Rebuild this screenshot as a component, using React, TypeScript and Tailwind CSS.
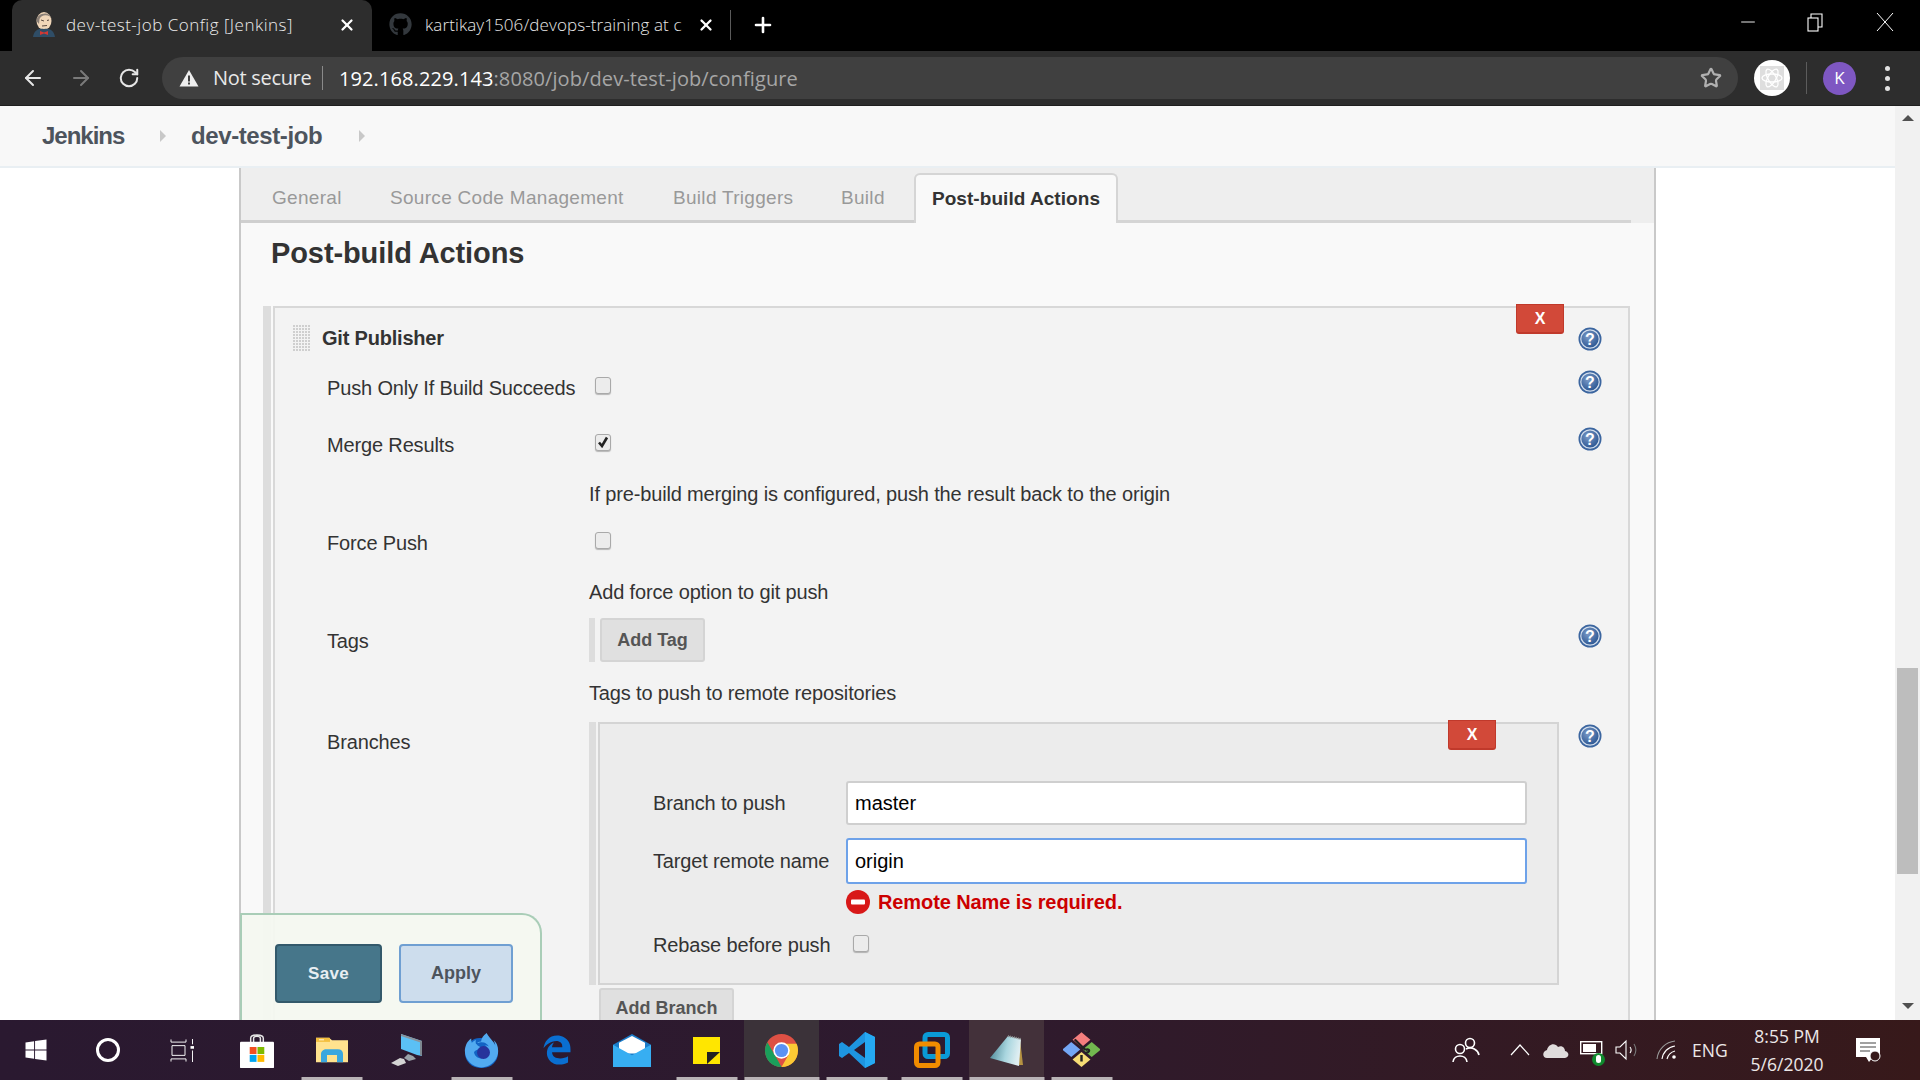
import React from "react";
import { ArrowLeft, ArrowRight, RotateCw, Star, X, Plus, Minus } from "lucide-react";
import { FaGithub, FaWindows, FaFirefoxBrowser } from "react-icons/fa";
import { FaEdgeLegacy } from "react-icons/fa6";

function Help({ className = "" }: { className?: string }) {
  return (
    <svg width="24" height="24" viewBox="0 0 24 24" className={className}>
      <defs>
        <radialGradient id="hg" cx="40%" cy="35%" r="70%">
          <stop offset="0%" stopColor="#7d9cc8" />
          <stop offset="100%" stopColor="#2a5592" />
        </radialGradient>
      </defs>
      <circle cx="12" cy="12" r="11.5" fill="#3b659f" />
      <circle cx="12" cy="12" r="9.8" fill="#d3deec" />
      <circle cx="12" cy="12" r="8.6" fill="url(#hg)" />
      <text x="12" y="17.5" textAnchor="middle" fontSize="16" fontWeight="700" fill="#fff" fontFamily="Liberation Sans">?</text>
    </svg>
  );
}

function Check({ checked = false, className = "" }: { checked?: boolean; className?: string }) {
  return (
    <div className={`w-[16px] h-[17px] rounded-[3px] border border-[#a9a9a9] bg-[#ececec] shadow-[0_1px_1px_rgba(0,0,0,0.25)] flex items-center justify-center ${className}`}>
      {checked && (
        <svg width="12" height="12" viewBox="0 0 12 12">
          <path d="M2 6.5 L5 10 L10 1.5" fill="none" stroke="#222" strokeWidth="2.6" />
        </svg>
      )}
    </div>
  );
}

function Row({ label, h, children, help, helpClass = "" }: { label?: string; h: string; children?: React.ReactNode; help?: boolean; helpClass?: string }) {
  return (
    <div className={`flex items-center pl-[52px] pr-[26px] ${h}`}>
      <div className="w-[262px] shrink-0 text-[20px] tracking-[-0.15px] text-[#333]">{label}</div>
      <div className="flex-1 flex items-center">{children}</div>
      {help && <Help className={helpClass} />}
    </div>
  );
}

function RedX({ className = "" }: { className?: string }) {
  return (
    <div className={`absolute w-[48px] h-[30px] bg-[#d24939] border border-[#c0392b] border-b-2 rounded-b-[3px] flex items-center justify-center text-white font-bold text-[16px] ${className}`}>X</div>
  );
}

function GrayBtn({ children, className = "" }: { children: React.ReactNode; className?: string }) {
  return (
    <div className={`flex items-center justify-center bg-[#e0e0e0] border-2 border-[#d4d4d4] rounded-[3px] text-[#555] font-bold text-[18px] ${className}`}>{children}</div>
  );
}

function TaskIcon({ w = "w-[75px]", line = false, lineClass = "w-[61px]", active = "", children }: { w?: string; line?: boolean; lineClass?: string; active?: string; children: React.ReactNode }) {
  return (
    <div className={`relative h-full flex items-center justify-center shrink-0 ${w} ${active}`}>
      {children}
      {line && <div className={`absolute bottom-0 left-1/2 -translate-x-1/2 h-[3px] bg-[#b9b3b6] ${lineClass}`} />}
    </div>
  );
}

export default function App() {
  return (
    <div className="w-[1920px] h-[1080px] flex flex-col overflow-hidden bg-white font-['Liberation_Sans',sans-serif]">
      {/* tab strip */}
      <div className="h-[51px] bg-black flex items-end shrink-0 relative font-['Open_Sans',sans-serif]">
        <div className="ml-[12px] w-[360px] h-[51px] bg-[#2d2d2d] rounded-t-[10px] flex items-center pl-[20px] pb-[2px]">
          <svg width="22" height="25" viewBox="0 0 22 25" className="shrink-0 ml-[1px]">
            <ellipse cx="11" cy="9" rx="7.5" ry="9" fill="#f0d6b8" />
            <path d="M3.5 9 C3 1 17 -2 18.5 7 L17 4.5 C13 2 8 3 6.5 7 L6 12Z" fill="#8a7f76" />
            <path d="M0 25 C1 18 6 16 11 17 C16 16 21 18 22 25Z" fill="#2f4d66" />
            <path d="M7 19 L11 20.5 L15 19 L15 23 L11 21.5 L7 23Z" fill="#d33833" />
            <path d="M8 8 L11 9 M14 8.5 L16 8 M9 14 L14 13.5" stroke="#5a4a40" strokeWidth="1" />
          </svg>
          <span className="ml-[11px] text-[17px] font-light tracking-[0.5px] text-[#ececec] w-[272px] whitespace-nowrap">dev-test-job Config [Jenkins]</span>
          <X size={18} strokeWidth={3} className="text-white" />
        </div>
        <div className="h-[51px] w-[403px] flex items-center pl-[17px] pb-[2px] text-[#e8e8e8]">
          <FaGithub size={23} className="text-[#33383d] shrink-0" />
          <div className="relative ml-[13px] w-[272px] h-[26px] overflow-hidden">
            <span className="text-[17px] leading-[26px] font-light tracking-[0.1px] whitespace-nowrap">kartikay1506/devops-training at c</span>
            <div className="absolute inset-y-0 right-0 w-[20px] bg-gradient-to-r from-transparent to-black" />
          </div>
          <X size={18} strokeWidth={3} className="text-white ml-[0px] shrink-0" />
          <div className="w-px h-[30px] bg-[#5a5a5a] ml-[15px] shrink-0" />
          <Plus size={24} strokeWidth={2.6} className="text-white ml-[20px] shrink-0" />
        </div>
        <div className="flex-1" />
        <div className="h-[51px] flex items-center pr-[26px] pb-[8px] text-white">
          <Minus size={22} strokeWidth={1} />
          <svg width="18" height="20" viewBox="0 0 16 20" fill="none" stroke="#fff" strokeWidth="1.1" className="ml-[47px]">
            <rect x="1" y="6" width="10" height="13" />
            <path d="M4 6 V2 H15 V15 H11" />
          </svg>
          <svg width="18" height="20" viewBox="0 0 18 20" fill="none" stroke="#fff" strokeWidth="1" className="ml-[52px]">
            <path d="M1 1 L17 19 M17 1 L1 19" />
          </svg>
        </div>
      </div>
      {/* toolbar */}
      <div className="h-[55px] bg-[#2d2d2d] border-b border-[#1f1f1f] flex items-center shrink-0 font-['Open_Sans',sans-serif]">
        <ArrowLeft size={24} strokeWidth={2} className="ml-[21px] text-[#e6e6e6]" />
        <ArrowRight size={24} strokeWidth={2} className="ml-[24px] text-[#7a7a7a]" />
        <RotateCw size={22} strokeWidth={2.2} className="ml-[25px] text-[#e6e6e6]" />
        <div className="ml-[22px] w-[1576px] h-[42px] rounded-full bg-[#404040] flex items-center pl-[17px] pr-[16px] shrink-0">
          <svg width="20" height="18" viewBox="0 0 20 18"><path d="M10 1 L19.5 17.5 H0.5Z" fill="#eee" /><rect x="9" y="6.5" width="2" height="6" fill="#404040" /><rect x="9" y="13.5" width="2" height="2" fill="#404040" /></svg>
          <span className="ml-[14px] text-[20px] tracking-[-0.3px] text-[#e8e8e8] w-[108px] whitespace-nowrap">Not secure</span>
          <div className="w-px h-[24px] bg-[#8a8a8a] ml-[1px]" />
          <span className="ml-[16px] mt-[1px] text-[20px] tracking-[0.1px] text-white whitespace-nowrap">192.168.229.143<span className="text-[#a6a6a6]">:8080/job/dev-test-job/configure</span></span>
          <div className="flex-1" />
          <Star size={22} strokeWidth={2.4} className="text-[#b0b0b0]" />
        </div>
        <div className="ml-[16px] w-[36px] h-[36px] rounded-full bg-white flex items-center justify-center shrink-0">
          <svg width="26" height="26" viewBox="0 0 26 26">
            <rect x="1" y="1" width="24" height="24" fill="#dedede" />
            <g fill="none" stroke="#fff" strokeWidth="1.3">
              <ellipse cx="13" cy="13" rx="10" ry="4" />
              <ellipse cx="13" cy="13" rx="10" ry="4" transform="rotate(60 13 13)" />
              <ellipse cx="13" cy="13" rx="10" ry="4" transform="rotate(120 13 13)" />
            </g>
          </svg>
        </div>
        <div className="w-px h-[32px] bg-[#5c5c5c] ml-[16px]" />
        <div className="ml-[16px] w-[33px] h-[33px] rounded-full bg-[#7e57c2] flex items-center justify-center text-white text-[17px]">K</div>
        <div className="ml-[29px] flex flex-col gap-[5px]">
          <div className="w-[5px] h-[5px] rounded-full bg-[#e3e3e3]" />
          <div className="w-[5px] h-[5px] rounded-full bg-[#e3e3e3]" />
          <div className="w-[5px] h-[5px] rounded-full bg-[#e3e3e3]" />
        </div>
      </div>
      {/* page */}
      <div className="flex-1 min-h-0 flex">
        <div className="flex-1 min-w-0 flex flex-col relative overflow-hidden">
          <div className="h-[62px] shrink-0 bg-[#f8f8f8] border-b-2 border-[#e9eff3] flex items-center font-bold text-[24px] tracking-[-0.4px] text-[#4d545d]">
            <span className="ml-[42px] w-[118px] tracking-[-1px]">Jenkins</span>
            <div className="w-0 h-0 border-y-[6px] border-y-transparent border-l-[6px] border-l-[#c8c8c8]" />
            <span className="ml-[25px] w-[168px]">dev-test-job</span>
            <div className="w-0 h-0 border-y-[6px] border-y-transparent border-l-[6px] border-l-[#c8c8c8]" />
          </div>
          <div className="flex-1 min-h-0 pl-[239px] overflow-hidden">
            <div className="h-[1000px] border-x-2 border-[#c9c9c9] bg-[#f9f9f9] w-[1417px]">
              {/* tabs */}
              <div className="h-[55px] bg-[#eeeeee] flex items-end">
                <div className="flex items-center h-[53px] pt-[7px] w-[673px] border-b-[3px] border-[#cfcfcf] text-[19px] tracking-[0.3px] text-[#999]">
                  <span className="ml-[31px] w-[118px]">General</span>
                  <span className="w-[283px]">Source Code Management</span>
                  <span className="w-[168px]">Build Triggers</span>
                  <span className="">Build</span>
                </div>
                <div className="w-[204px] h-[50px] bg-[#f9f9f9] border-2 border-b-0 border-[#d5d5d5] rounded-t-[6px] flex items-center justify-center font-bold text-[19px] tracking-[0.05px] text-[#333]">Post-build Actions</div>
                <div className="w-[513px] h-[3px] bg-[#d5d5d5]" />
              </div>
              <h1 className="ml-[30px] mt-[11px] h-[40px] flex items-center font-bold text-[29px] tracking-[-0.1px] text-[#333]">Post-build Actions</h1>
              {/* git publisher */}
              <div className="ml-[22px] mt-[32px] mr-[24px] flex">
                <div className="w-[8px] bg-[#dddddd] shrink-0" />
                <div className="relative ml-[2px] flex-1 border-2 border-[#d8d8d8] bg-[#f3f3f3] h-[800px]">
                  <RedX className="right-[64px] -top-[4px]" />
                  <div className="flex items-center h-[58px] pt-[2px] pl-[18px] pr-[26px]">
                    <svg width="18" height="27" viewBox="0 0 18 27" className="shrink-0">
                      <defs><pattern id="dots" width="3" height="3" patternUnits="userSpaceOnUse"><rect width="2" height="2" fill="#cfcfcf" /></pattern></defs>
                      <rect width="18" height="27" fill="url(#dots)" />
                    </svg>
                    <span className="ml-[11px] flex-1 font-bold text-[20px] tracking-[-0.2px] text-[#333]">Git Publisher</span>
                    <Help className="mt-[2px]" />
                  </div>
                  <Row label="Push Only If Build Succeeds" h="h-[44px]" help helpClass="mb-[12px]">
                    <Check className="ml-[6px] mb-[6px]" />
                  </Row>
                  <Row label="Merge Results" h="h-[70px]" help helpClass="mb-[12px]">
                    <Check checked className="ml-[6px] mb-[6px]" />
                  </Row>
                  <div className="h-[28px] flex items-center pl-[314px] text-[20px] tracking-[-0.15px] text-[#333]">If pre-build merging is configured, push the result back to the origin</div>
                  <Row label="Force Push" h="h-[70px]">
                    <Check className="ml-[6px] mb-[6px]" />
                  </Row>
                  <div className="h-[28px] flex items-center pl-[314px] text-[20px] tracking-[-0.15px] text-[#333]">Add force option to git push</div>
                  <Row label="Tags" h="h-[70px]" help helpClass="mb-[10px]">
                    <div className="w-[6px] h-[44px] bg-[#dddddd] mb-[2px]" />
                    <GrayBtn className="ml-[5px] w-[105px] h-[44px] mb-[2px] pt-[1px]">Add Tag</GrayBtn>
                  </Row>
                  <div className="h-[34px] flex items-center pl-[314px] text-[20px] tracking-[-0.15px] text-[#333]">Tags to push to remote repositories</div>
                  {/* branches */}
                  <div className="flex items-start pl-[52px] pr-[26px] mt-[12px]">
                    <div className="w-[262px] shrink-0 text-[20px] tracking-[-0.15px] text-[#333] pt-[5px]">Branches</div>
                    <div className="flex-1 min-w-0">
                      <div className="flex h-[263px]">
                        <div className="w-[7px] bg-[#dddddd] shrink-0" />
                        <div className="relative ml-[2px] flex-1 border-2 border-[#d4d4d4] bg-[#ececec] pl-[53px] pr-[30px] pt-[56px]">
                          <RedX className="right-[61px] -top-[4px]" />
                          <div className="flex items-center h-[46px]">
                            <div className="w-[193px] text-[20px] tracking-[-0.15px] text-[#333]">Branch to push</div>
                            <div className="flex-1 h-[44px] bg-white border-2 border-[#cfcfcf] rounded-[3px] flex items-center pl-[7px] text-[20px] text-black">master</div>
                          </div>
                          <div className="flex items-center h-[46px] mt-[12px]">
                            <div className="w-[193px] text-[20px] tracking-[-0.15px] text-[#333]">Target remote name</div>
                            <div className="flex-1 h-[46px] bg-white border-2 border-[#6ea2e9] rounded-[3px] flex items-center pl-[7px] text-[20px] text-black">origin</div>
                          </div>
                          <div className="flex items-center h-[30px] mt-[3px] pl-[193px]">
                            <svg width="24" height="24" viewBox="0 0 24 24" className="shrink-0">
                              <circle cx="12" cy="12" r="12" fill="#d81818" />
                              <rect x="5" y="9.5" width="14" height="5" rx="1" fill="#fff" />
                            </svg>
                            <span className="ml-[8px] font-bold text-[20px] tracking-[-0.1px] text-[#cc0000]">Remote Name is required.</span>
                          </div>
                          <div className="flex items-center h-[40px] mt-[8px]">
                            <div className="w-[193px] text-[20px] tracking-[-0.15px] text-[#333] whitespace-nowrap">Rebase before push</div>
                            <Check className="ml-[7px] mb-[4px]" />
                          </div>
                        </div>
                      </div>
                      <GrayBtn className="ml-[10px] mt-[3px] w-[135px] h-[44px] pb-[3px] rounded-b-none">Add Branch</GrayBtn>
                    </div>
                    <Help className="ml-[19px] mt-[2px]" />
                  </div>
                </div>
              </div>
            </div>
          </div>
          {/* save bar */}
          <div className="absolute left-[240px] bottom-0 w-[302px] h-[107px] bg-[#f4f8f0]/95 border-2 border-b-0 border-[#a9cdb7] rounded-tr-[20px] flex items-start pt-[29px] pl-[33px] gap-[17px]">
            <div className="w-[107px] h-[59px] bg-[#46768a] border-2 border-[#33596b] rounded-[4px] flex items-center justify-center text-[#e8eef2] font-bold text-[17px] tracking-[0.3px]">Save</div>
            <div className="w-[114px] h-[59px] bg-[#cddded] border-2 border-[#6f9fd2] rounded-[4px] flex items-center justify-center text-[#4d545d] font-bold text-[18px]">Apply</div>
          </div>
        </div>
        {/* scrollbar */}
        <div className="w-[25px] shrink-0 bg-[#f1f1f1] flex flex-col items-center">
          <div className="mt-[9px] w-0 h-0 border-x-[6px] border-x-transparent border-b-[6px] border-b-[#505050]" />
          <div className="mt-[547px] w-[21px] h-[206px] bg-[#bdbdbd]" />
          <div className="mt-[129px] w-0 h-0 border-x-[6px] border-x-transparent border-t-[6px] border-t-[#505050]" />
        </div>
      </div>
      {/* taskbar */}
      <div className="h-[60px] shrink-0 bg-gradient-to-r from-[#2a1930] via-[#2e1a2e] to-[#37191a] flex items-center font-['Open_Sans',sans-serif]">
        <TaskIcon w="w-[72px]"><FaWindows size={24} className="text-white" /></TaskIcon>
        <TaskIcon w="w-[72px]"><div className="w-[24px] h-[24px] rounded-full border-[3px] border-white" /></TaskIcon>
        <TaskIcon w="w-[75px]">
          <svg width="24" height="23" viewBox="0 0 24 26" preserveAspectRatio="none" fill="none" stroke="#fff" strokeWidth="1">
            <path d="M1 0.5 V3.5 H16 V0.5 M2 7.5 H15 V18.5 H2Z M1 25.5 V22.5 H16 V25.5 M22.5 0 V6 M22.5 13 V26" />
            <rect x="20.5" y="8" width="4" height="3" fill="#fff" stroke="none" />
          </svg>
        </TaskIcon>
        <TaskIcon>
          <svg width="34" height="35" viewBox="0 0 35 40" preserveAspectRatio="none">
            <path d="M11 12 V6 C11 1 24 1 24 6 V12 M14 12 V6 C14 3 21 3 21 6 V12" fill="none" stroke="#e6e6e6" strokeWidth="1.5" />
            <rect y="10" width="35" height="30" rx="1" fill="#fff" />
            <rect x="10" y="16" width="7" height="8" fill="#f25022" /><rect x="18" y="16" width="7" height="8" fill="#7fba00" />
            <rect x="10" y="25" width="7" height="8" fill="#00a4ef" /><rect x="18" y="25" width="7" height="8" fill="#ffb900" />
          </svg>
        </TaskIcon>
        <TaskIcon line>
          <svg width="32" height="26" viewBox="0 0 32 32" preserveAspectRatio="none">
            <path d="M0 1 H13 L16 4 H32 V31 H0Z" fill="#ffe28e" />
            <rect x="0" y="1" width="14" height="5" fill="#f3bf3e" />
            <rect x="3" y="3" width="5" height="1" fill="#fff" />
            <path d="M5 31 V21 C5 17 8 15 10 15 H22 C25 15 27 17 27 21 V31 H21 V22 H11 V31Z" fill="#3aa7de" />
          </svg>
        </TaskIcon>
        <TaskIcon>
          <svg width="32" height="32" viewBox="0 0 32 32">
            <path d="M10 0 L31 7 V22 L26 21 L10 15Z" fill="#5bc0f5" />
            <path d="M10 0 L31 7 V9 L10 2Z" fill="#8a9199" />
            <path d="M29 8 L31 7 V22 L29 21Z" fill="#7d8890" />
            <path d="M17 20 L22 22 L25 25 L18 27 L13 24Z" fill="#9aa2a8" />
            <path d="M9 24 L13 25 L15 29 L7 32 L0 29Z" fill="#d4d4d4" />
          </svg>
        </TaskIcon>
        <TaskIcon line>
          <div className="relative w-[35px] h-[36px] flex items-center justify-center">
            <div className="absolute w-[33px] h-[30px] bottom-0 rounded-full bg-[#1263c4]" />
            <FaFirefoxBrowser size={35} className="text-[#52aaf0] relative" />
            <div className="absolute w-[13px] h-[13px] top-[14px] left-[13px] rounded-full bg-[#27339c]" />
          </div>
        </TaskIcon>
        <TaskIcon><FaEdgeLegacy size={30} className="text-[#0a6fd1]" /></TaskIcon>
        <TaskIcon>
          <svg width="38" height="33" viewBox="0 0 38 34" preserveAspectRatio="none">
            <path d="M0 11 L19 0 L38 11 V34 H0Z" fill="#1a7cc9" />
            <path d="M6 9 L19 2 L32 9 V20 H6Z" fill="#fff" />
            <path d="M0 11 L19 22 L38 11 V34 H0Z" fill="#37aef2" />
          </svg>
        </TaskIcon>
        <TaskIcon line>
          <svg width="27" height="27" viewBox="0 0 27 27">
            <rect width="27" height="27" fill="#ffe600" />
            <path d="M14 15 H27 L14 27Z" fill="#222" />
          </svg>
        </TaskIcon>
        <TaskIcon active="bg-[#3b3239]" line lineClass="w-full">
          <svg width="33" height="33" viewBox="0 0 34 34">
            <circle cx="17" cy="17" r="17" fill="#dd5044" />
            <path d="M2.4 8.5 L12 25 L17 34 C7 34 0 26.5 0 17 C0 14 1 11 2.4 8.5Z" fill="#1a9f5b" />
            <path d="M17 34 C27 34 34 26.5 34 17 C34 14.5 33.5 12 32.5 10 H17 L24 22Z" fill="#fcc934" />
            <circle cx="17" cy="17" r="8.5" fill="#fff" />
            <circle cx="17" cy="17" r="6.8" fill="#5a92f3" />
          </svg>
        </TaskIcon>
        <TaskIcon line>
          <svg width="36" height="36" viewBox="0 0 36 36">
            <path d="M26 0 L36 5 V31 L26 36 L10 21 L3 26 L0 24 V12 L3 10 L10 15Z M26 10 L15 18 L26 26Z" fill="#1e95e0" fillRule="evenodd" />
            <path d="M26 0 L36 5 V31 L26 36Z" fill="#25a9f2" />
          </svg>
        </TaskIcon>
        <TaskIcon line>
          <svg width="36" height="36" viewBox="0 0 36 36" fill="none">
            <rect x="11" y="2.5" width="22.5" height="22" rx="3" stroke="#0a9ad6" strokeWidth="5" />
            <rect x="2.5" y="12" width="21.5" height="21.5" rx="3" stroke="#f18c00" strokeWidth="5" />
          </svg>
        </TaskIcon>
        <TaskIcon active="bg-[#43313a]" line lineClass="w-full">
          <svg width="33" height="31" viewBox="0 0 33 31">
            <defs><linearGradient id="np" x1="0" x2="1" y1="0" y2="0.2"><stop offset="0%" stopColor="#3f7c8c" /><stop offset="60%" stopColor="#a9d6df" /><stop offset="100%" stopColor="#dfeef2" /></linearGradient></defs>
            <path d="M30 4 L33 30 L28 30Z" fill="#b69342" />
            <path d="M18 1 L31 4 L29 31 L0 23Z" fill="url(#np)" />
            <path d="M18 1 L31 4" stroke="#8a8a8a" strokeWidth="2" strokeDasharray="1 1" />
          </svg>
        </TaskIcon>
        <TaskIcon line>
          <svg width="37" height="36" viewBox="0 0 38 44" preserveAspectRatio="none">
            <rect x="12.5" y="3" width="13" height="13" transform="rotate(45 19 9.5)" fill="#f47e7e" />
            <rect x="2" y="15" width="13" height="13" transform="rotate(45 8.5 21.5)" fill="#74a7f5" />
            <rect x="23" y="15" width="13" height="13" transform="rotate(45 29.5 21.5)" fill="#72b84f" />
            <rect x="12.5" y="27" width="13" height="13" transform="rotate(45 19 33.5)" fill="#f7dc75" />
            <path d="M12 9 L23 22 M23 22 C28 19 28 26 23 25 M19 28 V36" stroke="#222" strokeWidth="2.5" fill="none" />
          </svg>
        </TaskIcon>
        <div className="flex-1" />
        <svg width="28" height="26" viewBox="0 0 28 26" fill="none" stroke="#fff" strokeWidth="1.6" className="mr-[30px]">
          <circle cx="8" cy="12" r="4.5" /><path d="M1 25 C2 17 14 17 15 25" />
          <circle cx="18" cy="6" r="4.5" /><path d="M14 12 C20 9 26 13 27 18" />
        </svg>
        <svg width="20" height="12" viewBox="0 0 20 12" fill="none" stroke="#fff" strokeWidth="1.2" className="mr-[13px]"><path d="M1 11 L10 1 L19 11" /></svg>
        <svg width="26" height="16" viewBox="0 0 26 16" className="mr-[11px]"><path d="M4 16 C-1 16 -1 9 4 8 C5 2 12 0 15 5 C19 3 22 6 22 9 C27 10 26 16 22 16Z" fill="#e0dcdc" /></svg>
        <div className="relative w-[24px] h-[24px] mr-[11px] mt-[5px]">
          <svg width="24" height="14" viewBox="0 0 24 14" fill="none" stroke="#fff" strokeWidth="1.4"><rect x="0.7" y="0.7" width="21" height="12" /><rect x="3" y="3" width="13" height="8" fill="#fff" stroke="none" /></svg>
          <div className="absolute -right-[1px] bottom-[-1px] w-[13px] h-[13px] rounded-full bg-[#0f8a2d] flex items-center justify-center">
            <div className="w-[5px] h-[8px] rounded-full bg-white" />
          </div>
        </div>
        <svg width="24" height="22" viewBox="0 0 24 22" fill="none" stroke="#fff" strokeWidth="1.1" className="mr-[17px]">
          <path d="M1 8 H5 L11 2 V20 L5 14 H1Z" /><path d="M15 8 C16.5 10 16.5 12 15 14" /><path d="M19 5 C21.5 9 21.5 13 19 17" stroke="#777" />
        </svg>
        <svg width="24" height="20" viewBox="0 0 24 20" fill="none" stroke="#fff" strokeWidth="1.1" className="mr-[12px]">
          <path d="M1 19 C2 9 10 2 19 1" stroke="#999" /><path d="M6 19 C7 12 12 7 19 6" /><path d="M11 19 C12 15 15 12 19 11" /><circle cx="18" cy="17" r="1.8" fill="#fff" stroke="none" />
        </svg>
        <span className="text-[17.5px] text-[#ece8e8] w-[40px] mr-[17px] whitespace-nowrap">ENG</span>
        <div className="w-[76px] text-[17.5px] leading-[28px] text-[#ece8e8] text-center mr-[30px] whitespace-nowrap flex flex-col items-center">
          <span>8:55 PM</span><span>5/6/2020</span>
        </div>
        <svg width="26" height="26" viewBox="0 0 26 26" className="mr-[39px]">
          <path d="M1 1 H25 V20 H18 L14 25 L11 20 H1Z" fill="#fff" />
          <path d="M5 6 H21 M5 10 H21 M5 14 H15" stroke="#444" strokeWidth="1.2" />
          <circle cx="20" cy="19" r="5" fill="#37191a" stroke="#fff" strokeWidth="1" />
        </svg>
      </div>
    </div>
  );
}
